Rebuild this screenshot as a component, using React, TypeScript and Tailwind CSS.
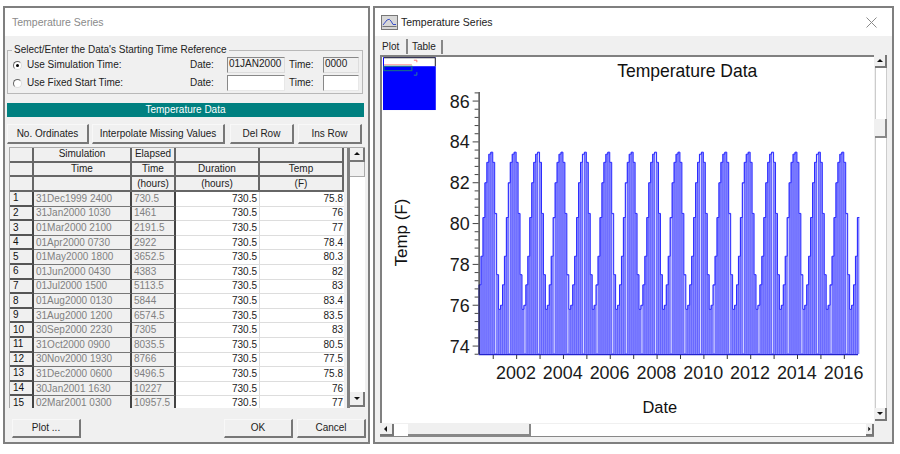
import React from 'react';

const rows = [
  ['1', '31Dec1999 2400', '730.5', '75.8'],
  ['2', '31Jan2000 1030', '1461', '76'],
  ['3', '01Mar2000 2100', '2191.5', '77'],
  ['4', '01Apr2000 0730', '2922', '78.4'],
  ['5', '01May2000 1800', '3652.5', '80.3'],
  ['6', '01Jun2000 0430', '4383', '82'],
  ['7', '01Jul2000 1500', '5113.5', '83'],
  ['8', '01Aug2000 0130', '5844', '83.4'],
  ['9', '31Aug2000 1200', '6574.5', '83.5'],
  ['10', '30Sep2000 2230', '7305', '83'],
  ['11', '31Oct2000 0900', '8035.5', '80.5'],
  ['12', '30Nov2000 1930', '8766', '77.5'],
  ['13', '31Dec2000 0600', '9496.5', '75.8'],
  ['14', '30Jan2001 1630', '10227', '76'],
  ['15', '02Mar2001 0300', '10957.5', '77'],
];

const cycle = [75.8, 76, 77, 78.4, 80.3, 82, 83, 83.4, 83.5, 83, 80.5, 77.5];
const yOf = (v: number) => 347 - (v - 74) * 20.5;

const Btn: React.FC<{ label: string; className: string }> = ({ label, className }) => (
  <button className={`flex items-center justify-center whitespace-nowrap bg-[#f0f0f0] border border-t-[#f8f8f8] border-l-[#f8f8f8] border-r-[#777] border-b-[#777] border-r-2 border-b-2 ${className}`}>
    {label}
  </button>
);

const Arrow: React.FC<{ dir: 'up' | 'down' | 'left' | 'right' }> = ({ dir }) => {
  const pts = { up: '1,5 7,5 4,2', down: '1,2 7,2 4,5', left: '5,1 5,7 2,4', right: '3,1 3,7 6,4' }[dir];
  return (
    <svg width="8" height="8" viewBox="0 0 8 8">
      <polygon points={pts} fill="#111" />
    </svg>
  );
};

const ScrollBtn: React.FC<{ dir: 'up' | 'down' | 'left' | 'right'; className: string }> = ({ dir, className }) => (
  <div className={`flex items-center justify-center shrink-0 bg-[#f0f0f0] border-r-2 border-b-2 border-r-[#777] border-b-[#777] ${className}`}>
    <Arrow dir={dir} />
  </div>
);

const HeadCell: React.FC<{ text?: string }> = ({ text }) => (
  <div className="flex items-center justify-center bg-[#f0f0f0] text-[#222] border-r-2 border-b-2 border-r-[#666] border-b-[#666]">{text}</div>
);

const DataTable = () => (
  <div className="flex h-[261px] ml-[4px] mt-[3px] w-[356px] border-l border-t border-[#aaa] overflow-hidden">
    <div className="w-[338px] flex flex-col overflow-hidden">
      {[
        ['', 'Simulation', 'Elapsed', '', ''],
        ['', 'Time', 'Time', 'Duration', 'Temp'],
        ['', '', '(hours)', '(hours)', '(F)'],
      ].map((h, i) => (
        <div key={i} className="grid grid-cols-[24px_98px_44px_84px_84px] grid-rows-[14.7px] h-[14.7px] shrink-0">
          {h.map((t, j) => <HeadCell key={j} text={t} />)}
        </div>
      ))}
      {rows.map((r) => (
        <div key={r[0]} className="grid grid-cols-[24px_98px_44px_84px_84px] grid-rows-[14.6px] h-[14.6px] shrink-0">
          <div className="flex items-center pl-[3px] bg-[#f0f0f0] text-[#111] border-r-2 border-b-2 border-r-[#444] border-b-[#555]">{r[0]}</div>
          <div className="flex items-center pl-[2px] bg-[#f0f0f0] text-[#808080] border-r-2 border-b border-r-[#444] border-b-[#777]">{r[1]}</div>
          <div className="flex items-center pl-[2px] bg-[#f0f0f0] text-[#808080] border-r-2 border-b border-r-[#444] border-b-[#777]">{r[2]}</div>
          <div className="flex items-center justify-end pr-[2px] bg-white text-[#222] border-r border-b border-[#ddd]">730.5</div>
          <div className="flex items-center justify-end pr-[1px] bg-white text-[#222] border-b border-[#ddd]">{r[3]}</div>
        </div>
      ))}
    </div>
    <div className="w-[3px] bg-[#808080]" />
    <div className="w-[15px] flex flex-col bg-[#f4f4f4]">
      <ScrollBtn dir="up" className="h-[14px]" />
      <div className="h-[15px] bg-[#f0f0f0] border-b border-r border-[#aaa]" />
      <div className="flex-1 bg-white" />
      <ScrollBtn dir="down" className="h-[15px] mb-[1px]" />
    </div>
  </div>
);

const TimeRow: React.FC<{ label: string; date: string; time: string; on?: boolean }> = ({ label, date, time, on }) => {
  const field = on
    ? 'bg-[#f0f0f0] border-t-[#888] border-l-[#888] border-r-[#ddd] border-b-[#ddd]'
    : 'bg-white border-t-[#888] border-l-[#888] border-r-[#e8e8e8] border-b-[#e8e8e8]';
  return (
    <div className="flex items-center h-[18px]">
      <span className="w-[9px] h-[9px] rounded-full border border-t-[#666] border-l-[#666] border-r-[#ddd] border-b-[#ddd] bg-white flex items-center justify-center">
        {on && <span className="w-[3px] h-[3px] rounded-full bg-black" />}
      </span>
      <span className="ml-[5px] w-[163px]">{label}</span>
      <span className="w-[37px]">Date:</span>
      <span className={`w-[58px] h-[16px] border pl-[1px] leading-[12px] ${field}`}>{date}</span>
      <span className="ml-[4px] w-[34px]">Time:</span>
      <span className={`w-[36px] h-[16px] border pl-[1px] leading-[12px] ${field}`}>{time}</span>
    </div>
  );
};

const LeftWindow = () => (
  <div className="w-[367px] h-[438px] flex flex-col bg-[#f0f0f0] border-2 border-[#7f7f7f] text-[10px] leading-[12px] text-[#222]">
    <div className="h-[28px] shrink-0 bg-white flex items-center pl-[7px] text-[10.5px] text-[#8a8a8a]">Temperature Series</div>
    <fieldset className="ml-[2px] mt-[8px] w-[356px] h-[50px] border border-[#b8b8b8] pl-[5px]">
      <legend className="ml-[-1px] px-[2px] leading-[12px]">Select/Enter the Data's Starting Time Reference</legend>
      <div className="flex flex-col gap-0">
        <TimeRow label="Use Simulation Time:" date="01JAN2000" time="0000" on />
        <TimeRow label="Use Fixed Start Time:" date="" time="" />
      </div>
    </fieldset>
    <div className="ml-[2px] mt-[9px] w-[357px] h-[14px] bg-[#008080] text-white flex items-center justify-center">Temperature Data</div>
    <div className="flex mt-[7px] ml-[2px] h-[20px]">
      <Btn label="No. Ordinates" className="w-[82px]" />
      <Btn label="Interpolate Missing Values" className="w-[133px] ml-[3px]" />
      <Btn label="Del Row" className="w-[64px] ml-[5px]" />
      <Btn label="Ins Row" className="w-[64px] ml-[4px]" />
    </div>
    <DataTable />
    <div className="flex mt-[11px] h-[19px]">
      <Btn label="Plot ..." className="w-[69px] ml-[7px] border-t-[#555] border-l-[#555] border-r-[#444] border-b-[#444]" />
      <Btn label="OK" className="w-[69px] ml-[143px]" />
      <Btn label="Cancel" className="w-[69px] ml-[4px]" />
    </div>
  </div>
);

const Chart = () => {
  const n = 195;
  const step = 1.958;
  const x0 = 477.5;
  let outline = `M${x0} 355`;
  const stems: string[] = [];
  const slits: string[] = [];
  for (let i = 0; i < n; i++) {
    const x = x0 + i * step;
    const y = yOf(cycle[(i + 2) % 12]);
    outline += ` L${x.toFixed(2)} ${y.toFixed(1)} L${(x + step).toFixed(2)} ${y.toFixed(1)}`;
    stems.push(`M${x.toFixed(2)} 355 L${x.toFixed(2)} ${y.toFixed(1)}`);
    // the thin pale gaps that show up every 7 or 8 bars
    if (i % 15 === 8 || i % 15 === 0) {
      if (i > 0) slits.push(`M${(x + 1).toFixed(2)} 354 L${(x + 1).toFixed(2)} ${(y + 1).toFixed(1)}`);
    }
  }
  const yTicks: number[] = [];
  for (let k = 0; k <= 32; k++) yTicks.push(73.6 + k * 0.4);
  const xTicks: number[] = [];
  for (let x = 491.7; x < 860; x += 23.5) xTicks.push(x);
  const font = { fontFamily: '"Liberation Sans", Arial, sans-serif' };
  return (
    <svg className="w-full h-full block" viewBox="380 57 494 367" style={font}>
      <path d={`${outline} L${x0 + n * step} 355 Z`} fill="#8c8cff" />
      <path d={stems.join(' ')} stroke="#5a5aff" strokeWidth="0.8" fill="none" />
      <path d={slits.join(' ')} stroke="#dcdcff" strokeWidth="1" fill="none" />
      <path d={outline} stroke="#2a2aff" strokeWidth="1" fill="none" />
      <path d="M477.5 92 V355" stroke="#222" strokeWidth="1.2" fill="none" />
      <path d="M477 355.5 H858" stroke="#2222cc" strokeWidth="1.2" fill="none" />
      {yTicks.map((v, k) => (
        <path key={k} d={`M${(k - 1) % 5 === 0 ? 471 : 473} ${yOf(v)} H477`} stroke="#444" strokeWidth="1" />
      ))}
      {xTicks.map((x) => (
        <path key={x} d={`M${x} 356 V360`} stroke="#333" strokeWidth="1" />
      ))}
      {[74, 76, 78, 80, 82, 84, 86].map((v) => (
        <text key={v} x="468" y={yOf(v) + 6.5} textAnchor="end" fontSize="18" fill="#1a1a1a">{v}</text>
      ))}
      {[2002, 2004, 2006, 2008, 2010, 2012, 2014, 2016].map((yr, i) => (
        <text key={yr} x={514.5 + i * 47} y="380" textAnchor="middle" fontSize="18" fill="#1a1a1a">{yr}</text>
      ))}
      <text x="686.5" y="77" textAnchor="middle" fontSize="17.6" fill="#111">Temperature Data</text>
      <text x="659" y="414" textAnchor="middle" fontSize="16.5" fill="#111">Date</text>
      <text transform="translate(405 233) rotate(-90)" textAnchor="middle" fontSize="17" fill="#111">Temp (F)</text>
      {/* overview box in the corner */}
      <rect x="381" y="57" width="53" height="53" fill="#0000ff" />
      <rect x="382" y="57.5" width="52" height="8.5" fill="#fff" />
      <path d="M382 57.5 H433.5 V66" stroke="#222" fill="none" />
      <path d="M382 64.5 H410" stroke="#ff9a9a" fill="none" />
      <rect x="382" y="66" width="28" height="4.5" fill="none" stroke="#1a7a7a" />
      <path d="M412 60 H415 V62" stroke="#ff7a7a" fill="none" />
      <path d="M412 75 H415 V72" stroke="#2a7a9a" fill="none" />
    </svg>
  );
};

const RightWindow = () => (
  <div className="w-[521px] h-[438px] flex flex-col bg-[#f0f0f0] border-2 border-[#7f7f7f] ml-[3px] text-[10px] leading-[12px] text-[#222]">
    <div className="h-[28px] shrink-0 bg-white flex items-center pl-[6px]">
      <svg width="17" height="15" viewBox="0 0 17 15">
        <rect x="0.5" y="0.5" width="16" height="14" fill="#d8d8d8" stroke="#777" />
        <path d="M1.5 11.5 H15.5" stroke="#777" />
        <path d="M2 10 L6 5 Q8.5 3 10 6 L12 9.5 H15" stroke="#3a50c8" fill="none" />
      </svg>
      <span className="ml-[3px] text-[#222] text-[10.5px]">Temperature Series</span>
      <svg className="ml-auto mr-[15px]" width="11" height="11" viewBox="0 0 11 11">
        <path d="M0.5 0.5 L10.5 10.5 M10.5 0.5 L0.5 10.5" stroke="#8a8a8a" strokeWidth="1" />
      </svg>
    </div>
    <div className="h-[19px] shrink-0 flex items-end pl-[7px] pb-[1px]">
      <span className="h-[15px] w-[26px] flex items-center border-r-2 border-r-[#888]">Plot</span>
      <span className="h-[14px] w-[35px] pl-[4px] flex items-center border-r-2 border-r-[#888]">Table</span>
    </div>
    <div className="flex ml-[5px] flex-1 min-h-0">
      <div className="w-[494px] flex flex-col">
        <div className="h-[368px] bg-white border-t-2 border-l-2 border-[#808080] overflow-hidden">
          <Chart />
        </div>
        <div className="flex h-[13px] mt-[1px] bg-white border-b border-[#888]">
          <ScrollBtn dir="left" className="w-[14px]" />
          <div className="w-[14px] bg-white" />
          <div className="w-[123px] bg-[#f0f0f0] border-r-2 border-b-2 border-[#888]" />
          <div className="flex-1" />
          <ScrollBtn dir="right" className="w-[8px]" />
        </div>
      </div>
      <div className="w-[12px] ml-[1px] h-[366px] flex flex-col bg-white">
        <ScrollBtn dir="up" className="h-[13px]" />
        <div className="h-[51px] bg-white border-l border-r border-[#ccc]" />
        <div className="h-[19px] bg-[#f0f0f0] border-b-2 border-r-2 border-[#888]" />
        <div className="flex-1 bg-white border-l border-r border-[#ccc]" />
        <ScrollBtn dir="down" className="h-[13px]" />
      </div>
    </div>
  </div>
);

export default function App() {
  return (
    <div className="w-[900px] h-[454px] bg-white pt-[6px] pl-[3px] flex items-start overflow-hidden" style={{ fontFamily: '"Liberation Sans", Arial, sans-serif' }}>
      <LeftWindow />
      <RightWindow />
    </div>
  );
}
